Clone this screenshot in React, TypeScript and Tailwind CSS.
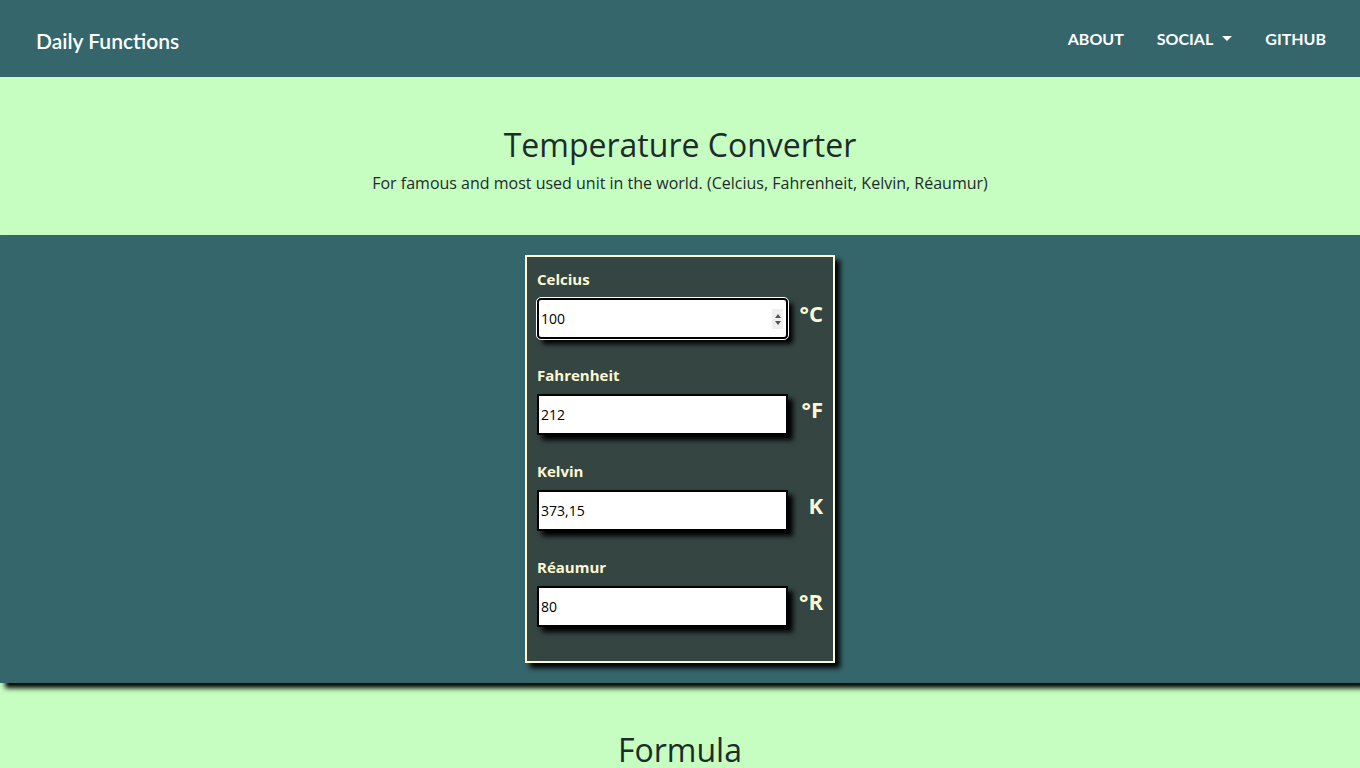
import React from 'react';

const units = [
    { label: 'Celcius', value: '100', unit: '°C', focused: true },
    { label: 'Fahrenheit', value: '212', unit: '°F' },
    { label: 'Kelvin', value: '373,15', unit: 'K' },
    { label: 'Réaumur', value: '80', unit: '°R' },
];

function UnitField({ label, value, unit, focused }: { label: string; value: string; unit: string; focused?: boolean }) {
    return (
        <div className="mb-[25px]">
            <label className="block text-[15px] font-bold leading-[22px] text-[#fdf8d4] mb-2">{label}</label>
            <div className="flex items-start">
                <div className="relative w-[251px]">
                    <input
                        type="text"
                        defaultValue={value}
                        className={
                            focused
                                ? 'block w-full h-[41px] bg-white border-2 border-black rounded-[4px] outline outline-1 outline-white px-[2px] text-[14px] text-black shadow-[5px_5px_5px_#000]'
                                : 'block w-full h-[41px] bg-white border-2 border-black px-[2px] text-[14px] text-black shadow-[5px_5px_5px_#000] focus:outline-none'
                        }
                    />
                    {focused && (
                        <div className="absolute right-[5px] top-[11px] w-[11px] h-[20px] bg-[#efefef] flex flex-col items-center justify-center gap-[3px]">
                            <svg width="6" height="4" viewBox="0 0 6 4"><path d="M3 0 L6 4 L0 4 Z" fill="#555" /></svg>
                            <svg width="6" height="4" viewBox="0 0 6 4"><path d="M0 0 L6 0 L3 4 Z" fill="#555" /></svg>
                        </div>
                    )}
                </div>
                <div className="flex-1 text-right text-[22px] font-bold leading-[31px] text-[#fdf8d4]">{unit}</div>
            </div>
        </div>
    );
}

export default function App() {
    return (
        <div className="min-h-screen bg-[#c6fdc1] font-['Open_Sans',sans-serif] text-[#1e2b2b]">
            {/* navbar */}
            <nav className="h-[77px] bg-[#35666b] flex items-center justify-between pl-9 pr-[34px] font-['Lato',sans-serif]">
                <a className="text-[21px] font-semibold text-white mt-[4px]">Daily Functions</a>
                <ul className="flex items-center gap-[33px] text-[16px] font-bold text-white uppercase">
                    <li>About</li>
                    <li className="flex items-center">
                        Social
                        <span className="ml-[9px] inline-block w-0 h-0 border-x-[5px] border-x-transparent border-t-[5px] border-t-white" />
                    </li>
                    <li>Github</li>
                </ul>
            </nav>

            {/* hero */}
            <header className="h-[158px] flex flex-col items-center pt-[46px]">
                <h1 className="text-[32px] leading-[44px] font-normal">Temperature Converter</h1>
                <p className="text-[16px] leading-[24px] mt-[4px]">
                    For famous and most used unit in the world. (Celcius, Fahrenheit, Kelvin, Réaumur)
                </p>
            </header>

            {/* converter */}
            <section className="bg-[#35666b] py-5 flex justify-center shadow-[5px_5px_5px_#000] relative">
                <div className="w-[310px] bg-[#344542] border-2 border-[#fdf8d4] shadow-[5px_5px_5px_#000] px-[10px] pt-[11px] pb-[9px]">
                    {units.map((u) => (
                        <UnitField key={u.label} {...u} />
                    ))}
                </div>
            </section>

            {/* formula */}
            <section className="pt-[45px] pb-20 flex flex-col items-center">
                <h2 className="text-[32px] leading-[44px]">Formula</h2>
                <p className="mt-4 text-[16px]">°F = (°C × 9/5) + 32</p>
            </section>
        </div>
    );
}
